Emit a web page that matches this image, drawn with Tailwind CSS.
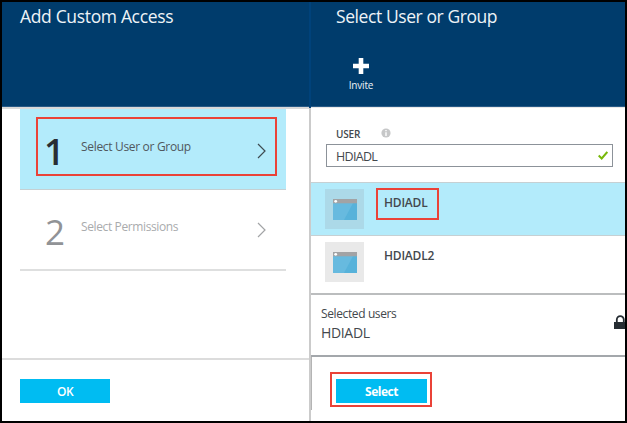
<!DOCTYPE html>
<html lang="en">
<head>
<meta charset="utf-8">
<title>Add Custom Access</title>
<script src="https://cdn.jsdelivr.net/npm/@tailwindcss/browser@4"></script>
</head>
<body class="w-[627px] h-[423px] overflow-hidden bg-white font-['Open_Sans','Noto_Sans',sans-serif] text-[#43484d]">
<svg class="hidden">
  <symbol id="app" viewBox="0 0 24 21">
    <path fill="#57b2da" d="M0 4h24v17H0z"/>
    <path fill="#67badf" d="M0 4h20L11 21H0z"/>
    <path fill="#a2a3a5" d="M0 0h24v4.300H0z"/>
    <circle cx="2.700" cy="2.300" r="1.400" fill="#fff"/>
  </symbol>
</svg>
<div class="w-full h-full border-2 border-black flex">
  <section class="w-[307px] flex flex-col">
    <header class="h-[105px] shrink-0 bg-[#003c6c] border-b border-[#285a86] pl-[18px] pt-[2px] text-[17.5px] leading-[24px] tracking-[-0.34px] text-[#eef3f7] whitespace-nowrap"><h1>Add Custom Access</h1></header>
    <div class="h-[2px] bg-[#d9d9d9] shrink-0"></div>
    <ol class="ml-[18px] w-[266px] h-[249px]">
      <li class="h-[81px] bg-[#b3ebfb] border-b border-[#c5d0d3] pt-[8px] pl-[16px]">
        <div class="w-[241px] h-[59px] border-2 border-[#ea4238] flex items-center">
          <span class="w-[42px] pl-[6px] pt-[10px] text-[36px] leading-[40px] font-semibold text-[#292e33]">1</span>
          <span class="flex-1 pl-px text-[12px] leading-[16px] tracking-[-0.32px] text-[#50585e] whitespace-nowrap">Select User or Group</span>
          <svg class="w-[9px] h-[16px] mr-[9px] mt-[8px]" viewBox="0 0 9 16" fill="none" stroke="#3e4b51" stroke-width="1.200"><path d="M1 1l7 7-7 7"/></svg>
        </div>
      </li>
      <li class="h-[81px] border-b-2 border-[#dedfdf] flex pl-[25px] text-[#a9abad]">
        <span class="w-[36px] pt-[22px] text-[35px] leading-[40px] text-[#919396] font-medium tracking-[-1px]">2</span>
        <span class="flex-1 pt-[29px] text-[12px] leading-[16px] tracking-[-0.38px] whitespace-nowrap">Select Permissions</span>
        <svg class="w-[9px] h-[16px] mr-[20px] mt-[32px]" viewBox="0 0 9 16" fill="none" stroke="#a2a4a6" stroke-width="1.200"><path d="M1 1l7 7-7 7"/></svg>
      </li>
    </ol>
    <footer class="border-t-2 border-[#dcdcdc] flex-1 pl-[18px] pt-[19px]">
      <button class="w-[90px] h-[24px] bg-[#00bcf2] text-white text-[12px] font-semibold leading-[26px] tracking-[-0.5px] block">OK</button>
    </footer>
  </section>
  <div class="w-[2px] flex flex-col"><div class="h-[106px] bg-[#00427a]"></div><div class="flex-1 bg-[#cbcbcb]"></div></div>
  <section class="flex-1 flex flex-col overflow-hidden">
    <header class="h-[105px] shrink-0 bg-[#003c6c] border-b border-[#285a86] pl-[25px] pt-[2px] text-[17.5px] leading-[24px] tracking-[-0.42px] text-[#eef3f7] whitespace-nowrap">
      <h1>Select User or Group</h1>
      <div class="w-[50px] flex flex-col items-center mt-[30px]">
        <svg class="w-[16px] h-[16px]" viewBox="0 0 16 16" fill="#fff"><path d="M5.700 0h4.600v5.700H16v4.600h-5.700V16H5.700v-5.700H0V5.700h5.700z"/></svg>
        <span class="text-[10px] leading-[14px] mt-[4px] tracking-[-0.2px]">Invite</span>
      </div>
    </header>
    <div class="h-px bg-[#e9e9e9] shrink-0"></div>
    <div class="h-[74px] shrink-0 pt-[18px] pl-[15px]">
      <div class="h-[14px] pl-[10px] flex items-center">
        <span class="w-[45px] text-[10px] leading-[14px] font-semibold pt-[2px] tracking-[-0.2px]">USER</span>
        <svg class="w-[10px] h-[10px]" viewBox="0 0 10 10"><circle cx="5" cy="5" r="4.600" fill="#c6c7c8"/><path fill="#fff" d="M4.300 4.200h1.400V8H4.300zM4.300 2h1.400v1.300H4.300z"/></svg>
      </div>
      <div class="mt-[4px] w-[287px] h-[23px] border border-[#8c9299] flex items-center pl-[9px] pr-[4px] text-[12.500px] leading-[16px] tracking-[-0.700px]">
        <span class="flex-1 pt-[2px]">HDIADL</span>
        <svg class="w-[10px] h-[9px]" viewBox="0 0 10 9" fill="none" stroke="#78b80b" stroke-width="2"><path d="M.7 4.500l3 3L9.300 1"/></svg>
      </div>
    </div>
    <div class="h-[54px] shrink-0 bg-[#b3ebfb] border-y border-[#c6d0d3] flex pl-[14px] pt-[6px]">
      <div class="w-[39px] h-[40px] bg-[#acd9e8] flex justify-center pt-[10px]"><svg class="w-[24px] h-[21px]"><use href="#app"/></svg></div>
      <div class="ml-[12px] -mt-px w-[63px] h-[32px] border-2 border-[#ea4238] pl-[6px] pt-[5px] text-[12px] leading-[16px] font-semibold tracking-[-0.2px]">HDIADL</div>
    </div>
    <div class="h-[59px] shrink-0 border-b-2 border-[#bbbdbe] flex pl-[14px] pt-[6px]">
      <div class="w-[39px] h-[40px] bg-[#e9e9e9] flex justify-center pt-[10px]"><svg class="w-[24px] h-[21px]"><use href="#app"/></svg></div>
      <div class="pl-[20px] pt-[6px] text-[12px] leading-[16px] font-semibold tracking-[-0.2px]">HDIADL2</div>
    </div>
    <div class="h-[62px] shrink-0 border-b-2 border-[#a3a7ab] flex justify-between pl-[10px]">
      <div class="pt-[11px]">
        <div class="text-[12px] leading-[16px] tracking-[-0.38px]">Selected users</div>
        <div class="text-[14px] leading-[20px] pt-px tracking-[-0.34px]">HDIADL</div>
      </div>
      <svg class="w-[11px] h-[14px] mt-[20px]" viewBox="0 0 11 14"><path fill="none" stroke="#252c32" stroke-width="1.800" d="M2.800 8V4.800a3.500 3.700 0 0 1 7 0V8"/><path fill="#252c32" d="M0 7h11v7H0z"/></svg>
    </div>
    <div class="flex-1 pl-[19px] pt-[15px] relative">
      <div class="absolute left-0 top-0 w-px h-[53px] bg-[#b4b4b4]"></div>
      <div class="w-[102px] h-[35px] border-2 border-[#ea4238] p-[4px] pt-[5px]">
        <button class="block w-[91px] h-[24px] bg-[#00bcf2] text-white text-[12px] leading-[25px] font-bold tracking-[-0.5px]">Select</button>
      </div>
    </div>
  </section>
</div>
</body>
</html>
